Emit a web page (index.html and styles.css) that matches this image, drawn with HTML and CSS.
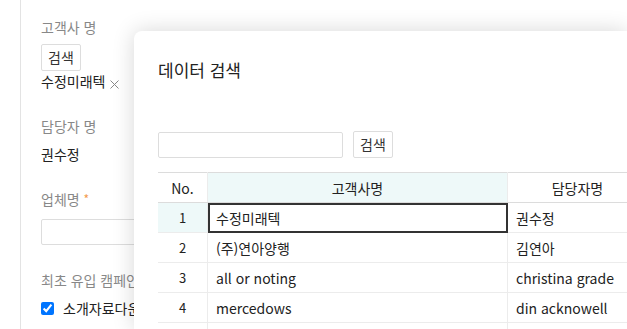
FILE: index.html
```html
<!DOCTYPE html>
<html lang="ko">
<head>
  <meta charset="UTF-8">
  <meta name="viewport" content="width=device-width, initial-scale=1.0">
  <title>데이터 검색</title>
  <link rel="stylesheet" href="styles.css">
</head>
<body>
  <div class="page">
    <div class="label first">고객사 명</div>
    <button class="btn small">검색</button>
    <div class="value picked">수정미래텍
      <svg class="remove" width="9" height="9" viewBox="0 0 9 9"><path d="M0.5 0.5L8.5 8.5M8.5 0.5L0.5 8.5" stroke="#888" stroke-width="1"/></svg>
    </div>

    <div class="label">담당자 명</div>
    <div class="value">권수정</div>

    <div class="label">업체명 <span class="req">*</span></div>
    <input class="field" type="text">

    <div class="label">최초 유입 캠페인</div>
    <label class="check"><input type="checkbox" checked> 소개자료다운로드</label>
  </div>

  <div class="modal">
    <h2 class="modal-title">데이터 검색</h2>
    <div class="search-row">
      <input class="field search" type="text">
      <button class="btn">검색</button>
    </div>
    <table class="grid">
      <thead>
        <tr>
          <th class="no">No.</th>
          <th class="name active">고객사명</th>
          <th class="person">담당자명</th>
        </tr>
      </thead>
      <tbody>
        <tr>
          <td class="no active">1</td>
          <td class="focus">수정미래텍</td>
          <td>권수정</td>
        </tr>
        <tr>
          <td class="no">2</td>
          <td>(주)연아양행</td>
          <td>김연아</td>
        </tr>
        <tr>
          <td class="no">3</td>
          <td>all or noting</td>
          <td>christina grade</td>
        </tr>
        <tr>
          <td class="no">4</td>
          <td>mercedows</td>
          <td>din acknowell</td>
        </tr>
        <tr>
          <td class="no"></td>
          <td></td>
          <td></td>
        </tr>
      </tbody>
    </table>
  </div>
</body>
</html>
```

FILE: styles.css
```css
html, body {
  overflow: hidden;
}
body {
  margin: 0;
  font-family: "Noto Sans CJK KR", "Noto Sans", sans-serif;
  font-size: 14px;
  color: #222;
  background-color: #fff;
  height: 329px;
}
.page {
  margin-left: 20px;
  border-left: 1px solid #e3e3e3;
  padding: 0 20px;
  height: 329px;
  box-sizing: border-box;
}
.label {
  color: #888;
  line-height: 20px;
  margin-top: 25px;
}
.label.first {
  padding-top: 17px;
  margin-top: 0;
}
.req {
  color: #f39a4c;
  font-size: 12px;
  vertical-align: top;
}
.value {
  line-height: 20px;
  margin-top: 8px;
}
.value.picked {
  margin-top: 0;
  display: flex;
  align-items: center;
  gap: 5px;
}
.remove {
  margin-top: 7px;
}
.btn {
  font-family: inherit;
  font-size: 14px;
  color: #333;
  background-color: #fff;
  border: 1px solid #ddd;
  border-radius: 2px;
  height: 27px;
  padding: 0 6px;
  line-height: 25px;
}
.btn.small {
  margin-top: 7px;
  display: block;
}
.field {
  display: block;
  box-sizing: border-box;
  height: 26px;
  border: 1px solid #ddd;
  border-radius: 2px;
  width: 300px;
  margin-top: 10px;
}
.check {
  display: flex;
  align-items: center;
  gap: 9px;
  margin-top: 8px;
  line-height: 20px;
  white-space: nowrap;
}
.check input {
  margin: 0;
  width: 13px;
  height: 13px;
}
.modal {
  position: absolute;
  left: 134px;
  top: 31px;
  right: 0;
  bottom: 0;
  overflow: hidden;
  background-color: #fff;
  border-radius: 8px 0 0 0;
  box-shadow: 0 0 22px rgba(0, 0, 0, 0.16);
  padding: 27px 0 0 24px;
}
.modal-title {
  margin: 0;
  font-size: 17px;
  font-weight: normal;
  line-height: 24px;
  color: #222;
}
.search-row {
  display: flex;
  align-items: center;
  gap: 10px;
  margin-top: 49px;
}
.field.search {
  width: 185px;
  margin-top: 0;
}
.grid {
  margin-top: 14px;
  border-collapse: collapse;
  table-layout: fixed;
  width: 490px;
}
.grid th, .grid td {
  height: 29px;
  padding: 0 8px;
  border: 1px solid #ececec;
  font-weight: normal;
  text-align: left;
}
.grid thead th {
  border-top: 1px solid #dcdcdc;
  border-bottom: 1px solid #dcdcdc;
  text-align: center;
  color: #222;
}
.grid tr > :first-child {
  border-left: none;
}
.grid .no {
  width: 33px;
  text-align: center;
  font-size: 13px;
}
.grid th.no {
  font-size: 14px;
}
.grid .name {
  width: 283px;
}
.grid .active {
  background-color: #eef9f9;
}
.grid td.focus {
  outline: 2px solid #333;
  outline-offset: -2px;
}
```
